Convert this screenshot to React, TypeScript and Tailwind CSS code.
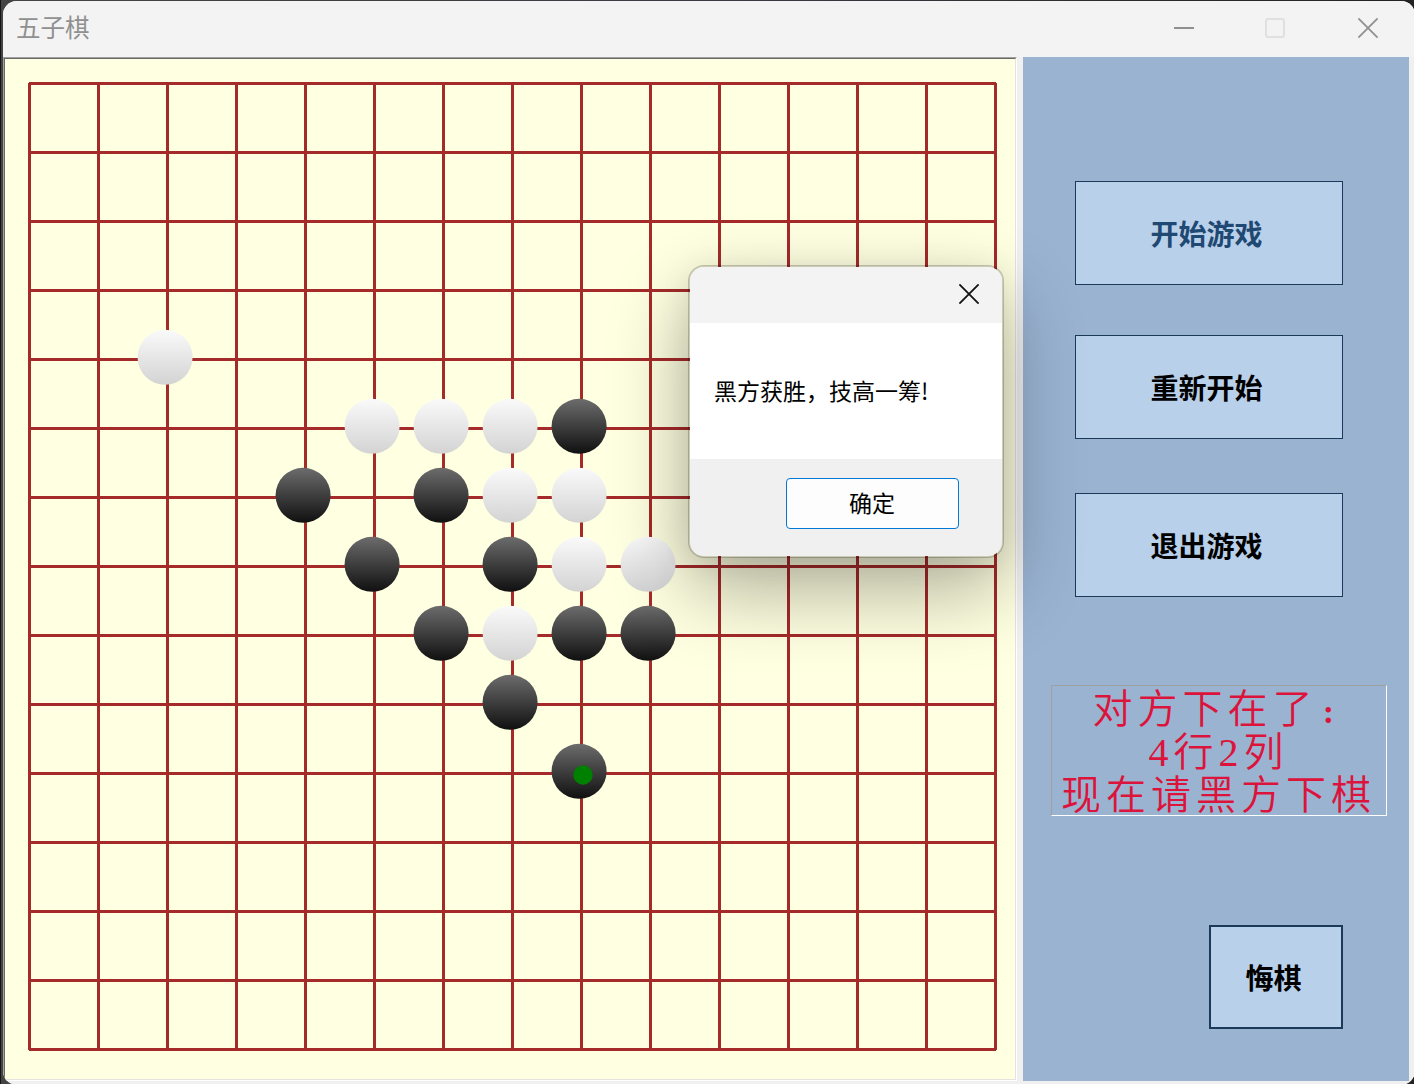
import React from "react";

type Stone = { col: number; row: number; color: "black" | "white" };

const STEP = 69;
const MARGIN_X = 24.5;
const MARGIN_Y = 24.5;
const LINES = Array.from({ length: 15 }, (_, i) => i);

const STONES: Stone[] = [
  { col: 2, row: 4, color: "white" },
  { col: 5, row: 5, color: "white" },
  { col: 6, row: 5, color: "white" },
  { col: 7, row: 5, color: "white" },
  { col: 8, row: 5, color: "black" },
  { col: 4, row: 6, color: "black" },
  { col: 6, row: 6, color: "black" },
  { col: 7, row: 6, color: "white" },
  { col: 8, row: 6, color: "white" },
  { col: 5, row: 7, color: "black" },
  { col: 7, row: 7, color: "black" },
  { col: 8, row: 7, color: "white" },
  { col: 9, row: 7, color: "white" },
  { col: 6, row: 8, color: "black" },
  { col: 7, row: 8, color: "white" },
  { col: 8, row: 8, color: "black" },
  { col: 9, row: 8, color: "black" },
  { col: 7, row: 9, color: "black" },
  { col: 8, row: 10, color: "black" },
];

function CloseIcon({ className }: { className: string }) {
  return (
    <svg className={className} width="20" height="20" viewBox="0 0 20 20" fill="none" stroke="currentColor" strokeWidth="1.8">
      <path d="M0.4 0.4L19.6 19.6M19.6 0.4L0.4 19.6" />
    </svg>
  );
}

function TitleBar() {
  return (
    <header className="flex h-14 shrink-0 items-center justify-between bg-[#f3f3f3] pl-[13px] pr-[37px]">
      <h1 className="mt-[-5px] text-[24.5px] leading-6 text-[#909090]">五子棋</h1>
      <div className="flex items-center">
        <svg className="mr-[71px] mt-[-2px]" width="20" height="20" viewBox="0 0 20 20">
          <rect x="0" y="9" width="20" height="2" fill="#909090" />
        </svg>
        <div className="mr-[73px] mt-[-2px] size-5 rounded-[3px] border-2 border-[#e0e0e0]" />
        <CloseIcon className="mt-[-2px] text-[#909090]" />
      </div>
    </header>
  );
}

function Board() {
  return (
    <div className="h-[1024px] w-[1014px] shrink-0 border border-b-white border-l-[#a0a0a0] border-r-white border-t-[#a0a0a0]">
      <div className="h-full w-full border border-b-[#e3e3e3] border-l-[#696969] border-r-[#e3e3e3] border-t-[#696969] bg-[#ffffe1]">
        <svg className="block" width="1010" height="1020" viewBox="0 0 1010 1020">
          <defs>
            <linearGradient id="whiteStone" x1="0" y1="0" x2="0" y2="1">
              <stop offset="0" stopColor="#fafafa" />
              <stop offset="1" stopColor="#d3d3d3" />
            </linearGradient>
            <linearGradient id="blackStone" x1="0" y1="0" x2="0" y2="1">
              <stop offset="0" stopColor="#6c6c6c" />
              <stop offset="1" stopColor="#101010" />
            </linearGradient>
          </defs>
          <g stroke="#a52a2a" strokeWidth="3">
            {LINES.map((i) => (
              <React.Fragment key={i}>
                <line x1={MARGIN_X - 0.5} x2={MARGIN_X + 0.5 + 14 * STEP} y1={MARGIN_Y + i * STEP} y2={MARGIN_Y + i * STEP} />
                <line y1={MARGIN_Y - 0.5} y2={MARGIN_Y + 0.5 + 14 * STEP} x1={MARGIN_X + i * STEP} x2={MARGIN_X + i * STEP} />
              </React.Fragment>
            ))}
          </g>
          {STONES.map((s) => (
            <circle
              key={`${s.col}-${s.row}`}
              cx={MARGIN_X - 2.4 + s.col * STEP}
              cy={MARGIN_Y - 2.2 + s.row * STEP}
              r="27.5"
              fill={s.color === "black" ? "url(#blackStone)" : "url(#whiteStone)"}
            />
          ))}
          <circle cx="578" cy="716" r="9.7" fill="#008000" />
        </svg>
      </div>
    </div>
  );
}

function SidePanel() {
  const button =
    "h-[104px] w-[268px] border border-[#1b3a5a] bg-[#b9d0ea] pr-[5px] text-[28px] font-bold leading-none";
  return (
    <aside className="ml-1.5 flex h-[1024px] w-[386px] shrink-0 flex-col bg-[#99b3d1] pl-[52px] pt-[124px]">
      <button className={`${button} text-[#1f4872]`}>开始游戏</button>
      <button className={`${button} mt-[50px] text-black`}>重新开始</button>
      <button className={`${button} mt-[54px] text-black`}>退出游戏</button>
      <div className="-ml-6 mt-[88px] h-[131px] w-[336px] border border-b-white border-l-[#a0a0a0] border-r-white border-t-[#a0a0a0] pr-px pt-[2px] text-center font-['Liberation_Serif','Noto_Sans_CJK_SC',serif] text-[40px] font-[350] leading-[43px] tracking-[5px] text-[#dc143c]">
        <p>
          对方下在了<span className="inline-block w-[27px] text-[34px] font-bold leading-none">:</span>
        </p>
        <p>4行2列</p>
        <p>现在请黑方下棋</p>
      </div>
      <button className="ml-[134px] mt-[109px] h-[104px] w-[134px] border-2 border-[#1b3a5a] bg-[#b9d0ea] pr-[5px] text-[28px] font-bold leading-none text-black">
        悔棋
      </button>
    </aside>
  );
}

function ResultDialog() {
  return (
    <section
      role="dialog"
      className="absolute left-[688px] top-[265px] flex h-[293px] w-[316px] flex-col overflow-hidden rounded-[16px] border-2 border-black/20 bg-[#f0f0f0] bg-clip-padding shadow-[0_32px_80px_rgba(0,0,0,0.32),0_4px_32px_rgba(0,0,0,0.07)]"
    >
      <div className="flex h-14 shrink-0 items-center justify-end bg-[#f3f3f3] pr-[23px]">
        <CloseIcon className="mt-[-2px] text-[#111]" />
      </div>
      <p className="h-[136px] shrink-0 bg-white pl-[24px] pt-[50px] text-[23px] leading-[34px] text-black">
        黑方获胜，技高一筹!
      </p>
      <div className="flex grow justify-end pr-[43px] pt-[19px]">
        <button className="h-[51px] w-[173px] rounded-[4px] border border-[#0078d4] bg-[#fdfdfd] pb-[2px] pr-px text-[23px] leading-none text-black">
          确定
        </button>
      </div>
    </section>
  );
}

export default function App() {
  return (
    <div className="relative h-[1084px] w-[1414px] overflow-hidden border-l border-[#151515] bg-[#151515] font-['Noto_Sans_CJK_SC',sans-serif]">
      <div className="h-full w-[1420px] bg-linear-to-r from-[#444] via-[#3a3a42] to-[#222] pl-[2px] pt-px">
        <main className="flex h-[1084px] w-[1412px] flex-col overflow-hidden rounded-[14px] bg-[#f0f0f0]">
          <TitleBar />
          <div className="flex">
            <Board />
            <SidePanel />
          </div>
        </main>
      </div>
      <div className="absolute inset-y-0 -left-px w-full">
        <ResultDialog />
      </div>
    </div>
  );
}
